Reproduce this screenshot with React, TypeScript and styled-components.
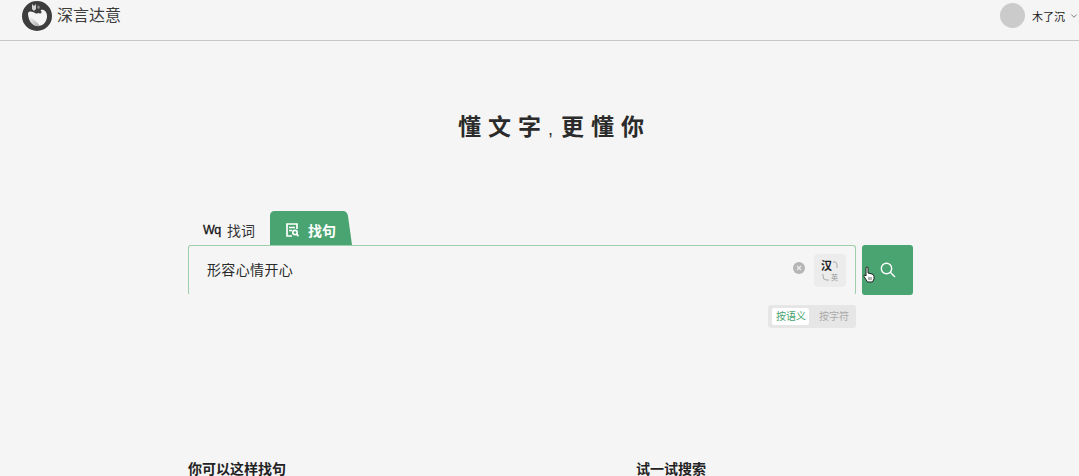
import React from "react";
import styled, { createGlobalStyle } from "styled-components";
import { ChevronDown } from "lucide-react";

const GlobalStyle = createGlobalStyle`
  html, body {
    margin: 0;
    padding: 0;
    background: #f5f5f5;
    overflow: hidden;
  }
  * {
    box-sizing: border-box;
  }
`;

const Page = styled.div`
  width: 1079px;
  height: 476px;
  overflow: hidden;
  background: #f5f5f5;
  color: #222;
  font-family: "Liberation Sans", "Noto Sans CJK SC", sans-serif;
`;

const Header = styled.header`
  height: 41px;
  padding: 0 0 0 22px;
  display: flex;
  align-items: flex-start;
  justify-content: space-between;
  border-bottom: 1px solid #c6c6c6;
`;

const Brand = styled.div`
  display: flex;
  align-items: center;
  gap: 5px;
  height: 31px;
`;

const BrandName = styled.span`
  font-size: 16px;
  line-height: 31px;
  color: #3c3c3c;
`;

const UserMenu = styled.div`
  display: flex;
  align-items: center;
  height: 31px;
  font-size: 11px;
  color: #222;
`;

const Avatar = styled.div`
  width: 25px;
  height: 25px;
  border-radius: 50%;
  background: #cbcbcb;
  margin-right: 7px;
`;

const Chevron = styled(ChevronDown)`
  margin-left: 4px;
  color: #666;
`;

const Slogan = styled.h1`
  margin: 0;
  padding: 69px 0 0 30px;
  height: 170px;
  text-align: center;
  font-size: 23px;
  line-height: 34px;
  font-weight: 700;
  letter-spacing: 7px;
  color: #2b2b2b;
`;

const SloganComma = styled.span`
  font-weight: 400;
  font-size: 18px;
  letter-spacing: 8px;
`;

const SearchArea = styled.section`
  width: 725px;
  margin-left: 188px;
`;

const Tabs = styled.div`
  display: flex;
  align-items: flex-end;
  height: 34px;
`;

const PlainTab = styled.div`
  width: 82px;
  height: 34px;
  display: flex;
  align-items: center;
  gap: 9px;
  padding: 4px 0 0 15px;
  font-size: 14px;
  color: #333;
`;

const ActiveTab = styled.div`
  width: 82px;
  height: 34px;
  display: flex;
  align-items: center;
  gap: 9px;
  padding: 4px 0 0 16px;
  font-size: 14px;
  font-weight: 700;
  color: #fff;
  background: #4aa471;
  clip-path: path("M0 34 V5 Q0 0 5 0 H73 Q77 0 78 5 L82 34 Z");
`;

const WordGlyph = styled.span`
  width: 15px;
  font-size: 12.5px;
  font-weight: 400;
  letter-spacing: -0.6px;
  color: #111;
  -webkit-text-stroke: 0.3px #111;
`;

const SearchRow = styled.div`
  display: flex;
  gap: 6px;
`;

const InputBox = styled.div`
  position: relative;
  width: 668px;
  height: 50px;
  display: flex;
  align-items: center;
  padding: 0 9px 0 18px;
  border: 1px solid #9dcfac;
  border-bottom-color: transparent;
  border-radius: 3px;
`;

const Query = styled.span`
  flex: 1;
  margin-top: -2px;
  font-size: 14px;
  letter-spacing: 0.35px;
  color: #2a2a2a;
`;

const ClearIcon = styled.svg`
  width: 12px;
  height: 12px;
  margin-right: 9px;
  margin-top: -4px;
`;

const LangToggle = styled.div`
  position: relative;
  width: 32px;
  height: 33px;
  margin-top: 1px;
  border-radius: 4px;
  background: #ececec;
`;

const LangMain = styled.span`
  position: absolute;
  left: 7px;
  top: 6px;
  font-size: 11px;
  line-height: 13px;
  font-weight: 700;
  color: #222;
`;

const LangSub = styled.span`
  position: absolute;
  left: 17px;
  top: 20px;
  font-size: 7px;
  line-height: 8px;
  color: #999;
`;

const LangArcs = styled.svg`
  position: absolute;
  inset: 0;
  width: 32px;
  height: 33px;
`;

const SearchButton = styled.button`
  position: relative;
  width: 51px;
  height: 50px;
  padding: 0 0 0 1px;
  display: flex;
  align-items: center;
  justify-content: center;
  border: 0;
  border-radius: 3px;
  background: #4aa471;
  color: #fff;
`;

const PointerCursor = styled.svg`
  position: absolute;
  left: 1px;
  top: 21px;
  width: 12px;
  height: 17px;
`;

const ModeRow = styled.div`
  width: 668px;
  display: flex;
  justify-content: flex-end;
  margin-top: 10px;
`;

const ModeSwitch = styled.div`
  width: 88px;
  height: 23px;
  display: flex;
  align-items: center;
  padding: 0 4px;
  border-radius: 3px;
  background: #e6e6e6;
`;

const ModeOption = styled.span<{ $active?: boolean }>`
  width: ${(p) => (p.$active ? 37 : 43)}px;
  height: 17px;
  padding-left: ${(p) => (p.$active ? 4 : 10)}px;
  border-radius: 2px;
  font-size: 10px;
  line-height: 17px;
  white-space: nowrap;
  color: ${(p) => (p.$active ? "#4aa471" : "#aaa")};
  background: ${(p) => (p.$active ? "#fff" : "transparent")};
`;

const Suggestions = styled.section`
  margin: 131px 0 0 188px;
  display: flex;
`;

const SuggestionTitle = styled.h2<{ $width?: number }>`
  margin: 0;
  width: ${(p) => (p.$width ? `${p.$width}px` : "auto")};
  font-size: 14px;
  line-height: 20px;
  font-weight: 700;
  color: #222;
`;

function Logo() {
  return (
    <svg width="30" height="31" viewBox="0 0 30 31">
      <defs>
        <linearGradient id="logoShade" x1="0" y1="0" x2="1" y2="1">
          <stop offset="0" stopColor="#f4f4f4" />
          <stop offset="1" stopColor="#a8a8a8" />
        </linearGradient>
      </defs>
      <circle cx="15" cy="16" r="15" fill="#3d3d3d" />
      <path
        d="M6 13 C8 10 11 12 13 13 C15 14 17 14 19 10 C22 9 25 12 25 16 C25 22 21 26 16 26 C10 26 6 20 6 13 Z"
        fill="#f4f4f4"
      />
      <path d="M7 17 C11 18 15 22 18 26 C12 27 8 23 7 17 Z" fill="url(#logoShade)" />
      <path d="M10 4 L12 6 L14 4 L14 9 L12 11 L10 9 Z" fill="#d2d2d2" />
      <path d="M16 5 L18 7 L17 9 L15 8 Z" fill="#8a8a8a" />
      <circle cx="18" cy="12" r="1.5" fill="#3d3d3d" />
    </svg>
  );
}

export default function App() {
  return (
    <Page>
      <GlobalStyle />
      <Header>
        <Brand>
          <Logo />
          <BrandName>深言达意</BrandName>
        </Brand>
        <UserMenu>
          <Avatar />
          木了沉
          <Chevron size={10} strokeWidth={2} />
        </UserMenu>
      </Header>
      <Slogan>
        懂文字<SloganComma>,</SloganComma>更懂你
      </Slogan>
      <SearchArea>
        <Tabs>
          <PlainTab>
            <WordGlyph>Wq</WordGlyph>
            找词
          </PlainTab>
          <ActiveTab>
            <svg width="13" height="14" viewBox="0 0 13 14" fill="none" stroke="#fff" strokeWidth="1.7">
              <path d="M6 13 H1 V1 H11 V6" />
              <path d="M3 4.5 H9 M3 7.5 H6" />
              <circle cx="9" cy="9.5" r="2.2" />
              <path d="M10.6 11.2 L12.5 13.2" />
            </svg>
            找句
          </ActiveTab>
        </Tabs>
        <SearchRow>
          <InputBox>
            <Query>形容心情开心</Query>
            <ClearIcon viewBox="0 0 12 12">
              <circle cx="6" cy="6" r="6" fill="#b5b5b5" />
              <path d="M4 4 L8 8 M8 4 L4 8" stroke="#eee" strokeWidth="1.3" />
            </ClearIcon>
            <LangToggle>
              <LangMain>汉</LangMain>
              <LangSub>英</LangSub>
              <LangArcs viewBox="0 0 32 33" fill="none" stroke="#aaa" strokeWidth="1">
                <path d="M19 8 H21 Q23 8 23 11 V14" />
                <path d="M9 20 V22 Q9 26 12 26 H15" />
              </LangArcs>
            </LangToggle>
          </InputBox>
          <SearchButton aria-label="搜索">
            <svg width="16" height="16" viewBox="0 0 16 16" fill="none" stroke="#fff" strokeWidth="1.4">
              <circle cx="6.5" cy="6.5" r="5.2" />
              <path d="M10.3 10.3 L15 15" />
            </svg>
            <PointerCursor viewBox="0 0 12 17">
              <path
                d="M3 1.5 Q4 .5 5 1.5 V7 L9 8 Q11 8.5 11 10.5 V13 L9.5 16 H4.5 L1 10.5 Q.5 9 2 9 L3 10 Z"
                fill="#fff"
                stroke="#222"
                strokeWidth="1"
              />
              <path d="M6 11 V14 M8 11 V14" stroke="#222" strokeWidth=".7" />
            </PointerCursor>
          </SearchButton>
        </SearchRow>
        <ModeRow>
          <ModeSwitch>
            <ModeOption $active>按语义</ModeOption>
            <ModeOption>按字符</ModeOption>
          </ModeSwitch>
        </ModeRow>
      </SearchArea>
      <Suggestions>
        <SuggestionTitle $width={448}>你可以这样找句</SuggestionTitle>
        <SuggestionTitle>试一试搜索</SuggestionTitle>
      </Suggestions>
    </Page>
  );
}
